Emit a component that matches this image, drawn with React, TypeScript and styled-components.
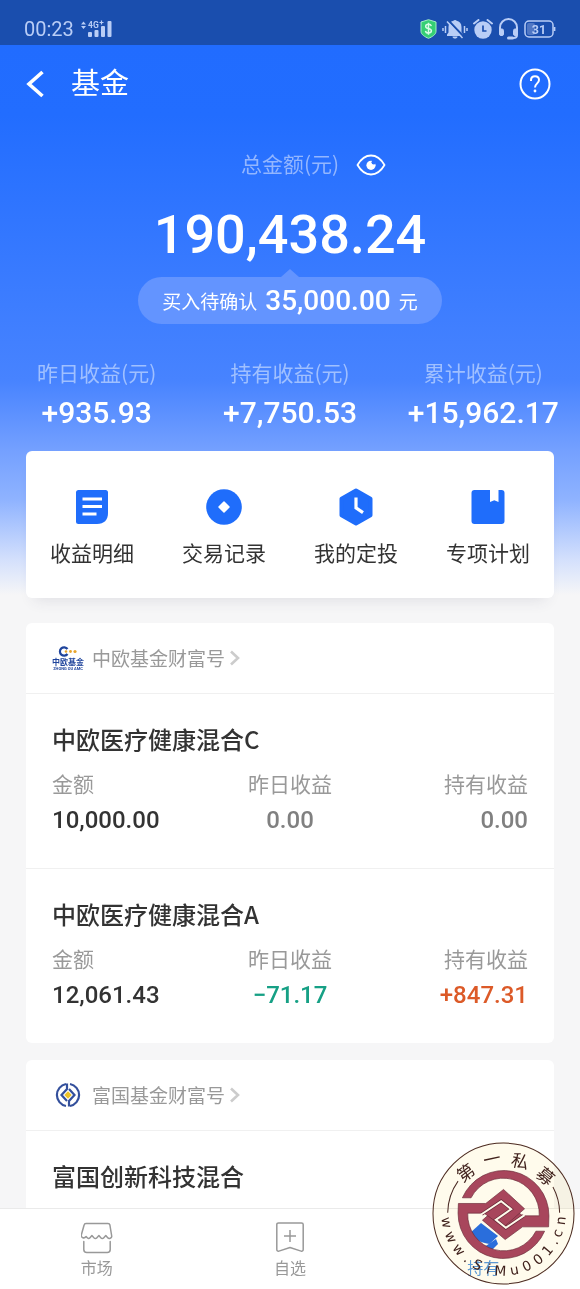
import React from 'react';
import styled, { createGlobalStyle } from 'styled-components';

const CJK = `'Noto Sans CJK SC', sans-serif`;
const NUM = `Roboto, 'Noto Sans CJK SC', sans-serif`;

const GlobalStyle = createGlobalStyle`
  * { box-sizing: border-box; }
  body { margin: 0; font-family: ${CJK}; background: #f6f6f7; color: #333; }
  button { border: 0; padding: 0; background: none; font: inherit; color: inherit; cursor: pointer; }
  a { color: inherit; text-decoration: none; }
  h1, h2, h3, p, dl, dd, dt { margin: 0; font-weight: 400; }
  svg { display: block; flex: none; }
`;

const Screen = styled.div`
  position: relative;
  height: 100vh;
  display: flex;
  flex-direction: column;
  overflow: hidden;
`;

const StatusBar = styled.header`
  flex: none;
  height: 45px;
  padding: 13px 24px 0;
  display: flex;
  justify-content: space-between;
  align-items: center;
  background: #1a4eae;
  color: #b9cdf6;
`;

const StatusGroup = styled.div<{ $gap: number }>`
  display: flex;
  align-items: center;
  gap: ${(p) => p.$gap}px;
`;

const Clock = styled.time`
  font: 400 20px/28px ${NUM};
`;

const Content = styled.main`
  flex: 1;
  min-height: 0;
  overflow: hidden;
  background: linear-gradient(
      #216cff 0,
      #226dff 70px,
      #3d7dff 260px,
      #4783ff 335px,
      #74a0ff 405px,
      #8fb3ff 455px,
      #d4e0fc 515px,
      #f6f6f7 550px
    )
    no-repeat #f6f6f7;
`;

const NavBar = styled.div`
  height: 78px;
  padding: 0 29px 0 26px;
  display: flex;
  align-items: center;
  color: #fff;
`;

const NavTitle = styled.h1`
  flex: 1;
  margin-left: 26px;
  padding-bottom: 6px;
  font-size: 29px;
  line-height: 40px;
`;

const Summary = styled.section`
  padding-top: 26px;
  color: #fff;
  display: flex;
  flex-direction: column;
  align-items: center;
`;

const TotalLabel = styled.div`
  width: 100%;
  display: grid;
  grid-template-columns: 1fr auto 1fr;
  align-items: center;
  font-size: 21px;
  line-height: 28px;
  color: #93b6ff;
`;

const TotalCaption = styled.span`
  grid-column: 2;
`;

const EyeButton = styled.button`
  grid-column: 3;
  justify-self: start;
  margin-left: 17px;
  padding-top: 4px;
`;

const Total = styled.p`
  margin-top: 26px;
  font: 500 54px/64px ${NUM};
`;

const Pending = styled.a`
  position: relative;
  margin-top: 10px;
  height: 47px;
  padding: 0 24px;
  border-radius: 24px;
  display: flex;
  align-items: center;
  gap: 8px;
  font-size: 19px;
  line-height: 28px;
  background: #6394ff;
  &::before {
    content: '';
    position: absolute;
    left: 50%;
    bottom: 100%;
    margin-left: -9px;
    border: 9px solid transparent;
    border-top-width: 0;
    border-bottom: 8px solid #6394ff;
  }
`;

const PendingValue = styled.strong`
  font: 500 28px/36px ${NUM};
`;

const Stats = styled.dl`
  width: 100%;
  margin-top: 34px;
  display: grid;
  grid-template-columns: repeat(3, 1fr);
  text-align: center;
`;

const StatLabel = styled.dt`
  font-size: 21px;
  line-height: 28px;
  color: #a0c0ff;
`;

const StatValue = styled.dd`
  margin-top: 9px;
  font: 500 30px/36px ${NUM};
`;

const Card = styled.section`
  margin: 0 26px 17px;
  border-radius: 6px;
  background: #fff;
`;

const Shortcuts = styled.nav`
  margin: 20px 26px 25px;
  height: 147px;
  padding-top: 36px;
  border-radius: 6px;
  background: #fff;
  box-shadow: 0 10px 14px -8px rgba(60, 60, 90, 0.12);
  display: grid;
  grid-template-columns: repeat(4, 1fr);
`;

const Shortcut = styled.a`
  display: flex;
  flex-direction: column;
  align-items: center;
  gap: 10px;
  font-size: 21px;
  line-height: 30px;
`;

const CardHead = styled.a`
  height: 71px;
  padding: 0 26px;
  display: flex;
  align-items: center;
  border-bottom: 1px solid #f0f0f0;
  font-size: 19px;
  line-height: 28px;
  color: #999;
`;

const LogoBox = styled.span`
  width: 32px;
  margin-right: 8px;
  display: flex;
  justify-content: center;
`;

const Fund = styled.article`
  padding: 28px 26px 30px;
  & + & { border-top: 1px solid #f0f0f0; }
`;

const FundName = styled.h3`
  font-size: 24px;
  line-height: 34px;
  font-weight: 500;
`;

const Figures = styled.dl`
  margin-top: 13px;
  display: grid;
  grid-template-columns: repeat(3, 1fr);
`;

const Figure = styled.div<{ $align: string }>`
  text-align: ${(p) => p.$align};
`;

const FigureLabel = styled.dt`
  font-size: 21px;
  line-height: 28px;
  color: #999;
`;

const FigureValue = styled.dd<{ $color: string }>`
  margin-top: 5px;
  font: 500 24px/36px ${NUM};
  color: ${(p) => p.$color};
`;

const TabBar = styled.nav`
  flex: none;
  height: 81px;
  padding-top: 13px;
  border-top: 1px solid #eaeaea;
  background: #fff;
  display: grid;
  grid-template-columns: repeat(3, 1fr);
`;

const Tab = styled.a<{ $active?: boolean }>`
  display: flex;
  flex-direction: column;
  align-items: center;
  gap: 1px;
  font-size: 16px;
  line-height: 24px;
  color: ${(p) => (p.$active ? '#5c9be4' : '#999')};
`;

const SealPaper = styled.span`
  position: absolute;
  right: 5px;
  bottom: 4px;
  width: 143px;
  height: 143px;
  border-radius: 50%;
  background: #fffbec;
  mix-blend-mode: multiply;
`;

const SealArt = styled.svg`
  position: absolute;
  right: 5px;
  bottom: 4px;
`;

const SignalIcon = () => (
  <svg width="33" height="18" viewBox="0 0 33 18" fill="currentColor">
    <path d="M0 4.500 2.500 1.500 5 4.500ZM0 6 2.500 9 5 6Z" />
    <text x="7" y="7.500" fontSize="8.500" fontWeight="700" fontFamily="Roboto">4G</text>
    <path d="M18.500 2.500h4M20.500.5v4" stroke="currentColor" strokeWidth="1.200" />
    <rect x="7" y="12" width="4" height="5" rx="1" />
    <rect x="13.500" y="10" width="4" height="7" rx="1" />
    <rect x="20" y="6" width="4" height="11" rx="1" />
    <rect x="26.500" y="1" width="4" height="16" rx="1" />
  </svg>
);

const ShieldIcon = () => (
  <svg width="17" height="20" viewBox="0 0 17 20">
    <path d="M8.500.7 16 3v9.500c0 3-4 5.500-7.500 6.800C5 18 1 15.500 1 12.500V3Z" fill="#35cf74" stroke="#a4f0c4" />
    <path d="M11.300 7.200C11 5.800 9.900 5.300 8.500 5.300c-1.700 0-2.800.8-2.800 2.100 0 3 5.700 1.300 5.700 4.400 0 1.400-1.200 2.200-2.900 2.200-1.600 0-2.800-.7-3-2.200M8.500 3.700v12" fill="none" stroke="#d8fbe6" strokeWidth="1.500" />
  </svg>
);

const MuteIcon = () => (
  <svg width="26" height="20" viewBox="0 0 26 20" fill="currentColor">
    <path d="M5 17v-1.500l1.500-2V8c0-3.500 2-5.700 4.900-6.200C12 .8 14.200.8 14.600 1.800 17.500 2.300 19.500 4.500 19.500 8v5.500l1.500 2V17ZM10.500 17.500h5c0 2.700-5 2.700-5 0Z" />
    <path d="M6 1 22 18" stroke="#1a4eae" strokeWidth="2" />
    <path d="M5 2.500 20.500 19" stroke="currentColor" strokeWidth="1.500" />
    <path d="M1 9v3M3.500 7v7M22.500 7v7M25 9v3" stroke="currentColor" strokeWidth="1.500" />
  </svg>
);

const AlarmIcon = () => (
  <svg width="20" height="20" viewBox="0 0 20 20">
    <circle cx="10" cy="11" r="8.700" fill="currentColor" />
    <path d="M1 4.500 5.500 1M19 4.500 14.500 1" stroke="currentColor" strokeWidth="2" strokeLinecap="round" />
    <path d="M10 6.500V12h3.500" fill="none" stroke="#1a4eae" strokeWidth="1.700" />
  </svg>
);

const HeadsetIcon = () => (
  <svg width="21" height="22" viewBox="0 0 21 22" fill="none" stroke="currentColor">
    <path d="M2 13V9.500a8.500 8.500 0 0 1 17 0V17c0 2-1.500 3-3.500 3H12" strokeWidth="2" />
    <rect x="1.500" y="11" width="4" height="6.500" rx="1.500" fill="currentColor" />
    <rect x="15.500" y="11" width="4" height="6.500" rx="1.500" fill="currentColor" />
    <path d="M10.500 20h4" strokeWidth="3" strokeLinecap="round" />
  </svg>
);

const BatteryIcon = () => (
  <svg width="32" height="18" viewBox="0 0 32 18">
    <rect x="3" y="3" width="8" height="12" rx="2" fill="#5077c4" />
    <rect x="1" y="1" width="28" height="16" rx="4" fill="none" stroke="currentColor" strokeWidth="1.500" />
    <path d="M30.500 7v4" stroke="currentColor" strokeWidth="1.800" />
    <text x="15" y="13.500" textAnchor="middle" fontSize="12.500" fontWeight="700" fontFamily="Roboto" fill="currentColor">31</text>
  </svg>
);

const BackIcon = () => (
  <svg width="19" height="28" viewBox="0 0 19 28">
    <path d="M16.500 2 3 14 16.500 26" fill="none" stroke="#fff" strokeWidth="3.600" />
  </svg>
);

const HelpIcon = () => (
  <svg width="32" height="32" viewBox="0 0 32 32" fill="none" stroke="#fff">
    <circle cx="16" cy="16" r="14.500" strokeWidth="2" />
    <path d="M12 13v-.7c0-2.500 1.700-4 4-4s4 1.500 4 3.800c0 3.200-4 3.500-4 7.400" strokeWidth="2" />
    <circle cx="16" cy="23" r="1.400" fill="#fff" stroke="none" />
  </svg>
);

const EyeIcon = () => (
  <svg width="30" height="22" viewBox="0 0 30 22">
    <path d="M1.500 11C5 5 9.500 1.500 15 1.500S25 5 28.500 11C25 17 20.500 20.500 15 20.500S5 17 1.500 11Z" fill="none" stroke="#fff" strokeWidth="1.800" strokeLinejoin="round" />
    <circle cx="15" cy="11.300" r="4.600" fill="#fff" />
    <circle cx="17.800" cy="8.300" r="2.300" fill="#2c72ff" />
  </svg>
);

const DetailIcon = () => (
  <svg width="40" height="40" viewBox="0 0 40 40">
    <path d="M6.500 3h27a2.500 2.500 0 0 1 2.500 2.500V26c0 7-4 11-11 11H6.500A2.500 2.500 0 0 1 4 34.500v-29A2.500 2.500 0 0 1 6.500 3Z" fill="#1f6dfb" />
    <path d="M10.500 12H30M10.500 19.500H30M10.500 27h14" stroke="#fff" strokeWidth="3" />
  </svg>
);

const RecordIcon = () => (
  <svg width="40" height="40" viewBox="0 0 40 40">
    <circle cx="20" cy="20" r="17.800" fill="#1f6dfb" />
    <path d="m20 15 5 5-5 5-5-5Z" fill="#fff" stroke="#fff" strokeWidth="1.500" strokeLinejoin="round" />
  </svg>
);

const PlanIcon = () => (
  <svg width="40" height="40" viewBox="0 0 40 40">
    <path d="M20 3.500 34.500 11.800v16.400L20 36.500 5.500 28.200V11.800Z" fill="#1f6dfb" stroke="#1f6dfb" strokeWidth="4" strokeLinejoin="round" />
    <path d="M20 10.500v10.300l7 4.800" fill="none" stroke="#fff" strokeWidth="3.200" />
  </svg>
);

const BookIcon = () => (
  <svg width="40" height="40" viewBox="0 0 40 40">
    <rect x="3.500" y="3" width="33" height="34" rx="3" fill="#1f6dfb" />
    <path d="M22 2h8.500v13l-4.200-1.800L22 15Z" fill="#fff" />
  </svg>
);

const ChevronIcon = () => (
  <svg width="17" height="18" viewBox="0 0 17 18">
    <path d="m6 2.500 7 6.500-7 6.500" fill="none" stroke="#ccc" strokeWidth="2.600" />
  </svg>
);

const ZhongouLogo = () => (
  <svg width="32" height="26" viewBox="0 0 32 26" fill="#1f449c">
    <path d="M15.500 4a4.200 4.200 0 1 0 0 5" fill="none" stroke="#1f449c" strokeWidth="2.200" />
    <circle cx="14" cy="6.500" r="1.300" fill="#e8a52c" />
    <circle cx="18.500" cy="6.500" r="1.400" fill="#e8a52c" />
    <circle cx="23" cy="6.500" r="1.600" fill="#e8a52c" />
    <text x="16" y="20" textAnchor="middle" fontSize="8" fontWeight="700" fontFamily="Noto Sans CJK SC">中欧基金</text>
    <text x="16" y="25" textAnchor="middle" fontSize="4" fontWeight="700" fontFamily="Roboto">ZHONG OU AMC</text>
  </svg>
);

const FuguoLogo = () => (
  <svg width="26" height="26" viewBox="0 0 26 26" fill="none" stroke="#34509c" strokeWidth="2.200">
    <path d="M11 2a11.200 11.200 0 0 0 0 22M15 2a11.200 11.200 0 0 1 0 22" />
    <path d="M12 1.500V7L6.500 13l5.500 6M14 24.500V19l5.500-6L14 7" />
    <path d="m13 9.300 3.700 3.700-3.700 3.700L9.300 13Z" fill="#edc228" stroke="none" />
  </svg>
);

const MarketIcon = () => (
  <svg width="32" height="32" viewBox="0 0 32 32" fill="none" stroke="#999" strokeWidth="1.500" strokeLinejoin="round" strokeLinecap="round">
    <path d="M5 1.500h22c1 0 1.700.6 1.900 1.500l1.800 11c.3 2.300-2.700 3.300-4.200 1.500l-1.700-2-2 2.200c-.9 1-2.100 1-3 0l-1.900-2.200-2 2.200c-.9 1-2 1-3 0l-2-2.200-1.900 2.200c-.9 1-2.100.9-3-.1l-.9-1c-2 2.400-5.200 1-4.800-1.600L3.100 3C3.300 2.100 4 1.500 5 1.500Z" />
    <path d="M2.800 19.500v8c0 1.900 1.100 3 3 3h20.400c1.900 0 3-1.100 3-3v-8" />
  </svg>
);

const BookmarkIcon = () => (
  <svg width="32" height="32" viewBox="0 0 32 32" fill="none" stroke="#999" strokeWidth="1.500" strokeLinejoin="round">
    <path d="M4.500.9h23c1 0 1.700.7 1.700 1.700v25c0 1.200-1 1.900-2.100 1.500L16 25.500 4.900 29.100c-1.100.4-2.100-.3-2.100-1.500v-25c0-1 .7-1.700 1.700-1.700Z" />
    <path d="M16 8v12M10 14h12" />
  </svg>
);

const HoldingIcon = () => (
  <svg width="32" height="32" viewBox="0 0 32 32" fill="#2a70ee">
    <path d="M3 11 14 1 31 14 22.500 22C15 21 7 18 3 11Z" />
    <path d="m18 24.500 11-7.500 2 5-6 6Z" />
  </svg>
);

const sealTop = [
  { ch: '第', x: 137, y: 128, turn: -36 },
  { ch: '一', x: 215, y: 87, turn: -12 },
  { ch: '私', x: 300, y: 94, turn: 13 },
  { ch: '募', x: 376, y: 138, turn: 40 },
];

const sealUrl = 'www.SiMu001.cn';
const sealAngles = [81, 66, 51, 39, 27, 15, 3, -11, -24, -37, -50, -61, -70, -83];

const Seal = () => (
  <>
    <SealPaper />
    <SealArt width="143" height="143" viewBox="36 36 428 428">
      <circle cx="250" cy="250" r="211" fill="none" stroke="#4b2a24" strokeWidth="3" />
      <path d="M83 248A167 167 0 0 1 114 153M418 248A167 167 0 0 0 398 171" fill="none" stroke="#4b2a24" strokeWidth="3" />
      <g transform="translate(105 105)" fill="#a8465c" stroke="#6b2b39" strokeWidth="2">
        <path d="M22 98A135 135 0 0 1 281 152L280 185H202L150 223 82 165 145 110 203 152H252A108 108 0 0 0 48 98Z" />
        <path d="M268 198A135 135 0 0 1 9 144L10 115H92L145 73 208 131 145 186 87 144H38A108 108 0 0 0 242 198Z" />
        <path d="M80 147 138 108 168 132 122 164 152 188 206 151" fill="none" stroke="#6b2b39" strokeWidth="10" />
        <path d="M78 148 138 108 168 132 122 164 152 188 208 150" fill="none" stroke="#fffbec" strokeWidth="6" />
      </g>
      <g fill="#40211c" fontFamily="Noto Sans CJK SC" fontSize="52" textAnchor="middle">
        {sealTop.map((g) => (
          <text key={g.ch} transform={`translate(${g.x} ${g.y}) rotate(${g.turn})`} y="19">{g.ch}</text>
        ))}
      </g>
      <g fill="#40211c" fontFamily="DejaVu Sans" fontSize="41" textAnchor="middle">
        {sealUrl.split('').map((ch, i) => (
          <text key={i} transform={`translate(250 250) rotate(${sealAngles[i]})`} y="186">{ch}</text>
        ))}
      </g>
    </SealArt>
  </>
);

const stats = [
  ['昨日收益(元)', '+935.93'],
  ['持有收益(元)', '+7,750.53'],
  ['累计收益(元)', '+15,962.17'],
];

const shortcuts = [
  { label: '收益明细', Icon: DetailIcon },
  { label: '交易记录', Icon: RecordIcon },
  { label: '我的定投', Icon: PlanIcon },
  { label: '专项计划', Icon: BookIcon },
];

const INK = '#333';
const MUTED = '#808080';
const GREEN = '#16a085';
const ORANGE = '#dc5a28';

const funds = [
  { name: '中欧医疗健康混合C', amount: '10,000.00', day: '0.00', dayColor: MUTED, held: '0.00', heldColor: MUTED },
  { name: '中欧医疗健康混合A', amount: '12,061.43', day: '−71.17', dayColor: GREEN, held: '+847.31', heldColor: ORANGE },
];

export default function App() {
  return (
    <Screen>
      <GlobalStyle />
      <StatusBar>
        <StatusGroup $gap={7}>
          <Clock>00:23</Clock>
          <SignalIcon />
        </StatusGroup>
        <StatusGroup $gap={5}>
          <ShieldIcon />
          <MuteIcon />
          <AlarmIcon />
          <HeadsetIcon />
          <BatteryIcon />
        </StatusGroup>
      </StatusBar>

      <Content>
        <NavBar>
          <button aria-label="返回"><BackIcon /></button>
          <NavTitle>基金</NavTitle>
          <button aria-label="帮助"><HelpIcon /></button>
        </NavBar>

        <Summary>
          <TotalLabel>
            <TotalCaption>总金额(元)</TotalCaption>
            <EyeButton aria-label="隐藏金额"><EyeIcon /></EyeButton>
          </TotalLabel>
          <Total>190,438.24</Total>
          <Pending href="#pending">
            买入待确认<PendingValue>35,000.00</PendingValue>元
          </Pending>
          <Stats>
            {stats.map(([label, value]) => (
              <div key={label}>
                <StatLabel>{label}</StatLabel>
                <StatValue>{value}</StatValue>
              </div>
            ))}
          </Stats>
        </Summary>

        <Shortcuts>
          {shortcuts.map(({ label, Icon }) => (
            <Shortcut key={label} href="#shortcut"><Icon />{label}</Shortcut>
          ))}
        </Shortcuts>

        <Card>
          <CardHead href="#zhongou">
            <LogoBox><ZhongouLogo /></LogoBox>中欧基金财富号<ChevronIcon />
          </CardHead>
          {funds.map((f) => (
            <Fund key={f.name}>
              <FundName>{f.name}</FundName>
              <Figures>
                <Figure $align="left">
                  <FigureLabel>金额</FigureLabel>
                  <FigureValue $color={INK}>{f.amount}</FigureValue>
                </Figure>
                <Figure $align="center">
                  <FigureLabel>昨日收益</FigureLabel>
                  <FigureValue $color={f.dayColor}>{f.day}</FigureValue>
                </Figure>
                <Figure $align="right">
                  <FigureLabel>持有收益</FigureLabel>
                  <FigureValue $color={f.heldColor}>{f.held}</FigureValue>
                </Figure>
              </Figures>
            </Fund>
          ))}
        </Card>

        <Card>
          <CardHead href="#fuguo">
            <LogoBox><FuguoLogo /></LogoBox>富国基金财富号<ChevronIcon />
          </CardHead>
          <Fund>
            <FundName>富国创新科技混合</FundName>
          </Fund>
        </Card>
      </Content>

      <TabBar>
        <Tab href="#market"><MarketIcon />市场</Tab>
        <Tab href="#watch"><BookmarkIcon />自选</Tab>
        <Tab href="#holding" $active><HoldingIcon />持有</Tab>
      </TabBar>
      <Seal />
    </Screen>
  );
}
